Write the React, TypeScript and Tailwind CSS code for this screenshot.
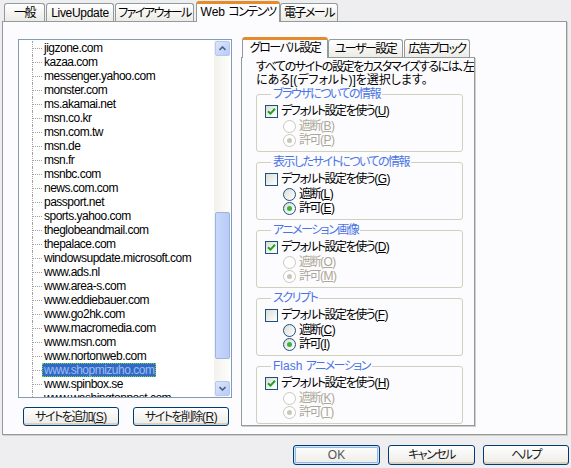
import React from 'react';

const SITES = [
  'jigzone.com',
  'kazaa.com',
  'messenger.yahoo.com',
  'monster.com',
  'ms.akamai.net',
  'msn.co.kr',
  'msn.com.tw',
  'msn.de',
  'msn.fr',
  'msnbc.com',
  'news.com.com',
  'passport.net',
  'sports.yahoo.com',
  'theglobeandmail.com',
  'thepalace.com',
  'windowsupdate.microsoft.com',
  'www.ads.nl',
  'www.area-s.com',
  'www.eddiebauer.com',
  'www.go2hk.com',
  'www.macromedia.com',
  'www.msn.com',
  'www.nortonweb.com',
  'www.shopmizuho.com',
  'www.spinbox.se',
  'www.washingtonpost.com',
];

const SELECTED = 'www.shopmizuho.com';

type Group = {
  title: React.ReactNode;
  id: string;
  useDefault: boolean;
  keys: [string, string, string];
};

const GROUPS: Group[] = [
  { id: 'browser', title: 'ブラウザについての情報', useDefault: true, keys: ['U', 'B', 'P'] },
  { id: 'site', title: '表示したサイトについての情報', useDefault: false, keys: ['G', 'L', 'E'] },
  { id: 'anim', title: 'アニメーション画像', useDefault: true, keys: ['D', 'O', 'M'] },
  { id: 'script', title: 'スクリプト', useDefault: false, keys: ['F', 'C', 'I'] },
  {
    id: 'flash',
    title: (
      <>
        <span className="tracking-normal">Flash </span>アニメーション
      </>
    ),
    useDefault: true,
    keys: ['H', 'K', 'T'],
  },
];

// mnemonic key, e.g. (U)
function Key({ k }: { k: string }) {
  return (
    <span className="tracking-[-0.5px]">
      (<span className="underline">{k}</span>)
    </span>
  );
}

function Tab({ label, selected, className = '' }: { label: React.ReactNode; selected?: boolean; className?: string }) {
  if (selected) {
    return (
      <div
        className={`relative z-10 -mb-px flex h-[21px] items-center justify-center whitespace-nowrap rounded-t-[3px] border border-b-0 border-[#919b9c] border-t-[3px] border-t-[#e68b2c] bg-[#fcfcfe] pb-[2px] ${className}`}
      >
        {label}
      </div>
    );
  }
  return (
    <div
      className={`flex h-[18px] items-center justify-center whitespace-nowrap rounded-t-[3px] border border-b-0 border-[#919b9c] bg-gradient-to-b from-white to-[#ecebe6] ${className}`}
    >
      {label}
    </div>
  );
}

function XpButton({ children, isDefault, className = '' }: { children: React.ReactNode; isDefault?: boolean; className?: string }) {
  return (
    <button
      className={`flex items-center justify-center whitespace-nowrap rounded-[3px] border border-[#003c74] bg-gradient-to-b from-white to-[#ecebe6] text-[#1a1a1a] ${
        isDefault
          ? 'shadow-[inset_0_0_0_1px_#cee7ff,inset_0_0_0_2px_#98b8ea]'
          : 'shadow-[inset_0_-2px_0_#d6d0c5]'
      } ${className}`}
    >
      {children}
    </button>
  );
}

function Checkbox({ checked }: { checked: boolean }) {
  return (
    <span className="flex h-[13px] w-[13px] shrink-0 items-center justify-center border border-[#1c5180] bg-gradient-to-br from-[#dcdcd7] to-white">
      {checked && (
        <svg width="9" height="9" viewBox="0 0 9 9">
          <path d="M1 4.2 L3.4 6.6 L8 1.8" fill="none" stroke="#21a121" strokeWidth="2" />
        </svg>
      )}
    </span>
  );
}

function Radio({ checked, disabled }: { checked: boolean; disabled: boolean }) {
  return (
    <span
      className={`flex h-[13px] w-[13px] shrink-0 items-center justify-center rounded-full border ${
        disabled ? 'border-[#cac8bb] bg-white' : 'border-[#1c5180] bg-gradient-to-br from-[#dcdcd7] to-white'
      }`}
    >
      {checked && (
        <span className={`h-[5px] w-[5px] rounded-full ${disabled ? 'bg-[#cac8bb]' : 'bg-[#3fb23f]'}`} />
      )}
    </span>
  );
}

function ScrollArrow({ down }: { down?: boolean }) {
  return (
    <div className="flex h-[15px] w-[15px] items-center justify-center rounded-[2px] border border-[#b5c8f0] bg-gradient-to-br from-[#dbe6fd] to-[#b8cbf6]">
      <svg width="7" height="5" viewBox="0 0 7 5">
        <path
          d={down ? 'M0.5 1 L3.5 4 L6.5 1' : 'M0.5 4 L3.5 1 L6.5 4'}
          fill="none"
          stroke="#4d6185"
          strokeWidth="1.6"
        />
      </svg>
    </div>
  );
}

function SiteList() {
  return (
    <div className="flex h-[359px] border border-[#7f9db9] bg-white">
      <div className="flex-1 overflow-hidden pt-[1px]">
        {SITES.map(site => (
          <div key={site} className="flex h-[14px] items-stretch">
            <div className="w-[13px] shrink-0" />
            <div className="flex w-[10px] shrink-0 items-center border-l border-dotted border-[#a0a0a0]">
              <div className="w-[9px] border-t border-dotted border-[#a0a0a0]" />
            </div>
            <div
              className={`flex items-center whitespace-nowrap px-[2px] text-[12px] tracking-[-0.5px] ${
                site === SELECTED
                  ? 'bg-[#316ac5] text-[#9ebcf0] outline outline-1 outline-dotted outline-[#6bdc3c] -outline-offset-1'
                  : 'text-black'
              }`}
            >
              {site}
            </div>
          </div>
        ))}
      </div>
      <div className="flex w-[17px] shrink-0 flex-col items-center bg-gradient-to-r from-[#f3f1ec] to-[#fefefb] py-[1px]">
        <ScrollArrow />
        <div className="h-[156px]" />
        <div className="h-[147px] w-[15px] rounded-[2px] border border-[#9cb3e6] bg-gradient-to-r from-[#c9d8fc] to-[#b8cbf6]" />
        <div className="flex-1" />
        <ScrollArrow down />
      </div>
    </div>
  );
}

function SettingGroup({ g }: { g: Group }) {
  const dis = g.useDefault;
  return (
    <fieldset className="mt-[3px] rounded-[3px] border border-[#d0d0bf] pb-[4px] pl-[8px] first:mt-0">
      <legend className="ml-[6px] whitespace-nowrap px-[2px] leading-[14px] text-[#4a74e4]">{g.title}</legend>
      <div className="pt-[3px]">
        <div className="flex h-[14px] items-center gap-[3px]">
          <Checkbox checked={g.useDefault} />
          <span>
            デフォルト設定を使う<Key k={g.keys[0]} />
          </span>
        </div>
        <div className="mt-[1px] flex h-[14px] items-center gap-[3px] pl-[18px]">
          <Radio checked={false} disabled={dis} />
          <span className={dis ? 'text-[#aca899]' : ''}>
            遮断<Key k={g.keys[1]} />
          </span>
        </div>
        <div className="flex h-[14px] items-center gap-[3px] pl-[18px]">
          <Radio checked disabled={dis} />
          <span className={dis ? 'text-[#aca899]' : ''}>
            許可<Key k={g.keys[2]} />
          </span>
        </div>
      </div>
    </fieldset>
  );
}

export default function App() {
  return (
    <div className="flex h-[468px] w-[571px] flex-col overflow-hidden bg-[#eeeef0] font-['Liberation_Sans','Noto_Sans_CJK_JP',sans-serif] text-[12px] leading-[14px] tracking-[-1.5px] text-black [font-feature-settings:'palt']">
      {/* top tabs */}
      <div className="flex h-[21px] items-end pl-[4px]">
        <Tab label="一般" className="w-[41px]" />
        <Tab label="LiveUpdate" className="ml-[1px] w-[68px] tracking-[-0.3px]" />
        <Tab label="ファイアウォール" className="ml-[1px] w-[79px]" />
        <Tab
          label={
            <>
              <span className="tracking-normal">Web&nbsp;</span>コンテンツ
            </>
          }
          selected
          className="ml-[2px] w-[84px]"
        />
        <Tab label="電子メール" className="w-[58px]" />
      </div>

      {/* tab body */}
      <div className="ml-[2px] flex h-[414px] w-[565px] border border-[#919b9c] bg-[#fcfcfe] pl-[15px] pt-[17px] shadow-[1px_1px_0_#d0d0c8]">
        <div className="flex w-[214px] flex-col">
          <SiteList />
          <div className="mt-[9px] flex">
            <XpButton className="ml-[5px] h-[19px] w-[96px]">
              サイトを追加<Key k="S" />
            </XpButton>
            <XpButton className="ml-[14px] h-[19px] w-[96px]">
              サイトを削除<Key k="R" />
            </XpButton>
          </div>
        </div>

        <div className="-mt-[2px] ml-[9px] flex w-[234px] flex-col">
          <div className="flex h-[20px] items-end pl-[1px]">
            <Tab label="グローバル設定" selected className="h-[20px] w-[86px]" />
            <Tab label="ユーザー設定" className="h-[17px] w-[75px]" />
            <Tab label="広告ブロック" className="ml-[1px] h-[17px] w-[66px]" />
          </div>
          <div className="h-[369px] overflow-hidden border border-[#919b9c] bg-[#fcfcfe] pl-[14px] pr-[11px] pt-[3px] shadow-[1px_1px_0_#d0d0c8]">
            <div className="whitespace-nowrap leading-[13px] tracking-[-1.4px]">すべてのサイトの設定をカスタマイズするには、左</div>
            <div className="whitespace-nowrap leading-[13px] tracking-normal">にある[(デフォルト)]を選択します。</div>
            <div className="flex flex-col">
              {GROUPS.map(g => (
                <SettingGroup key={g.id} g={g} />
              ))}
            </div>
          </div>
        </div>
      </div>

      {/* dialog buttons */}
      <div className="mt-[10px] flex justify-end gap-[8px] pr-[2px]">
        <XpButton isDefault className="h-[20px] w-[87px] tracking-normal text-[#555]">
          OK
        </XpButton>
        <XpButton className="h-[20px] w-[87px]">キャンセル</XpButton>
        <XpButton className="h-[20px] w-[86px]">ヘルプ</XpButton>
      </div>
    </div>
  );
}
